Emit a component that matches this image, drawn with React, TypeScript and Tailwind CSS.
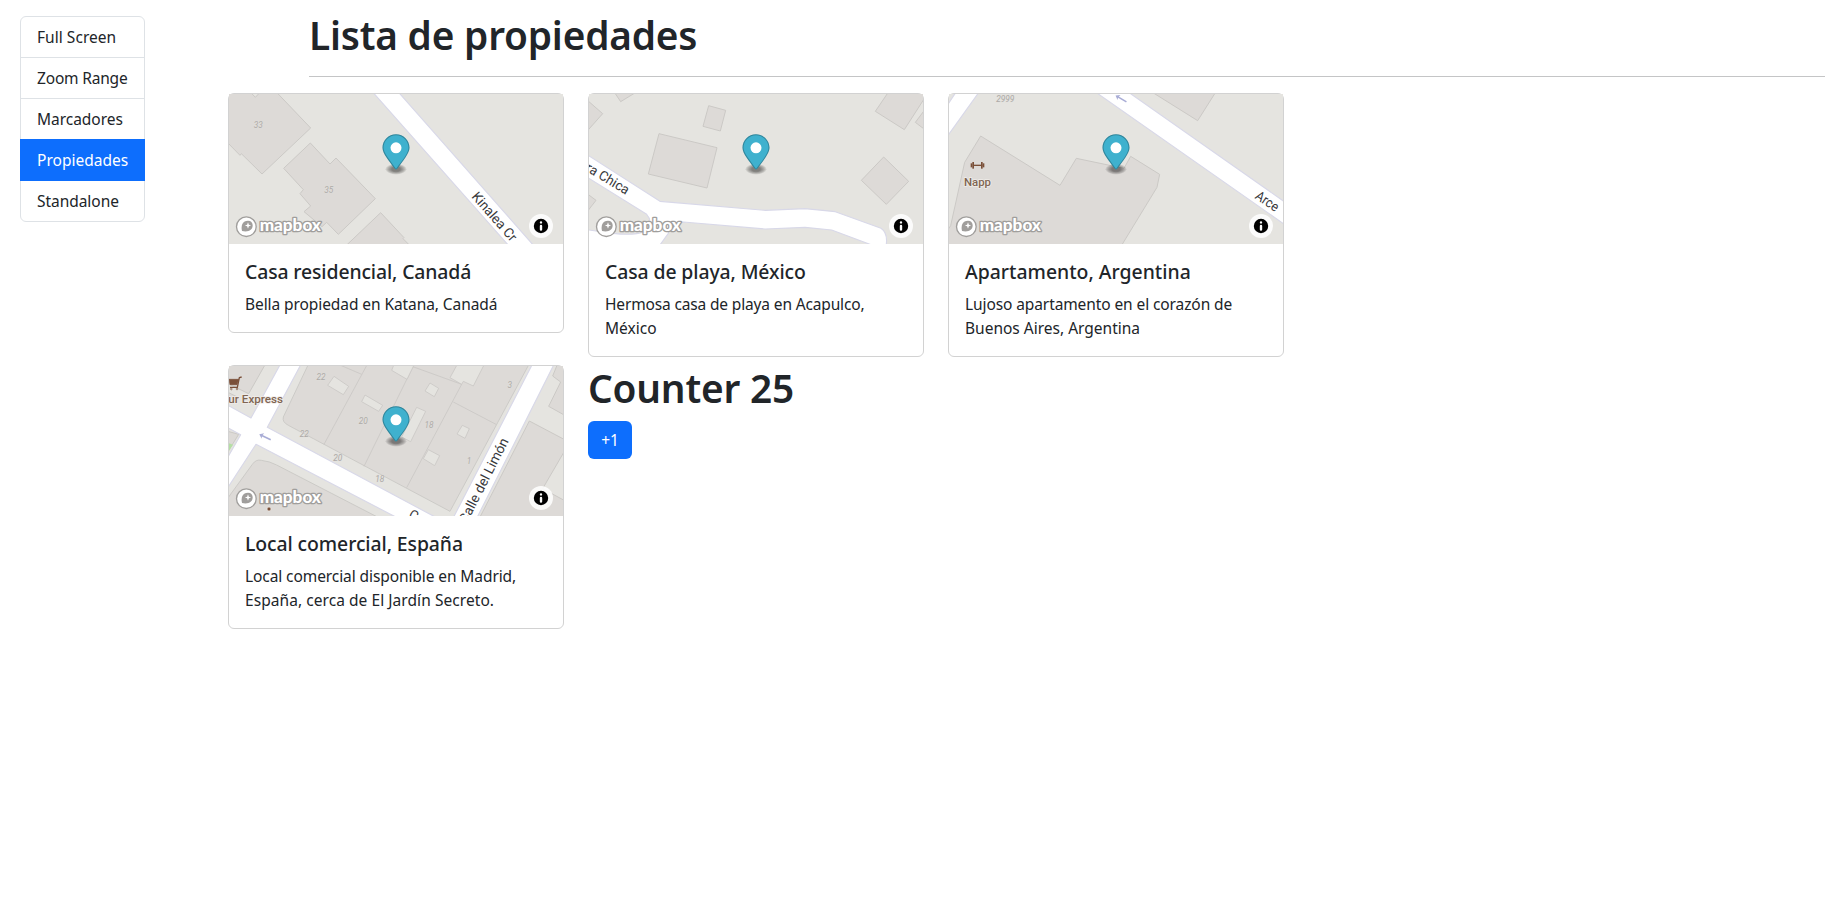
import React, { useState } from "react";

/* ---------- shared map drawing parts (3 drawing units per pixel) ---------- */

const LAND = "#e5e4e0";
const BUILDING = "#dddad7";
const EDGE = "#c9c7c4";
const ROAD_EDGE = "#d8d8e8";

function Building({ p }: { p: string }) {
  return <polygon points={p} fill={BUILDING} stroke={EDGE} strokeWidth={2.8} />;
}

function Yard({ p }: { p: string }) {
  return <polygon points={p} fill={LAND} stroke={EDGE} strokeWidth={2.4} />;
}

function Road({ d }: { d: string }) {
  return <path d={d} fill="#fff" stroke={ROAD_EDGE} strokeWidth={3.4} strokeLinejoin="round" />;
}

function HouseNo({ x, y, children }: { x: number; y: number; children: string }) {
  return (
    <text
      x={x}
      y={y + 9}
      textAnchor="middle"
      fontSize={28}
      fontStyle="italic"
      fill="#adaaa7"
      stroke="#e3e1de"
      strokeWidth={2}
      paintOrder="stroke"
      textLength={children.length * 13.6}
      lengthAdjust="spacingAndGlyphs"
    >
      {children}
    </text>
  );
}

function Street({ x, y, angle, length, anchor = "middle", children }: {
  x: number;
  y: number;
  angle: number;
  length: number;
  anchor?: "start" | "middle" | "end";
  children: string;
}) {
  return (
    <text
      transform={`translate(${x} ${y}) rotate(${angle})`}
      textAnchor={anchor}
      fontSize={41}
      fill="#37383b"
      stroke="#fff"
      strokeWidth={5}
      paintOrder="stroke"
      textLength={length}
      lengthAdjust="spacingAndGlyphs"
    >
      {children}
    </text>
  );
}

function Poi({ x, y, length, children }: { x: number; y: number; length: number; children: string }) {
  return (
    <text
      x={x}
      y={y}
      fontSize={35}
      fontWeight={500}
      fill="#7f6552"
      stroke="#efece9"
      strokeWidth={5}
      paintOrder="stroke"
      textLength={length}
      lengthAdjust="spacingAndGlyphs"
    >
      {children}
    </text>
  );
}

function OneWay({ x, y, angle }: { x: number; y: number; angle: number }) {
  return (
    <g transform={`translate(${x} ${y}) rotate(${angle})`} fill="#a9add6">
      <path d="M-19 0 L-7 -9 L-9 -2.4 L19 -2.4 L19 2.4 L-9 2.4 L-7 9 Z" />
    </g>
  );
}

function Pin() {
  return (
    <g transform="translate(487.5 148) scale(3)">
      <g fill="#000" fillOpacity={0.08}>
        <ellipse cx={13.5} cy={34.8} rx={10.5} ry={5.25} />
        <ellipse cx={13.5} cy={34.8} rx={9.5} ry={4.77} />
        <ellipse cx={13.5} cy={34.8} rx={8.5} ry={4.3} />
        <ellipse cx={13.5} cy={34.8} rx={7.5} ry={3.82} />
        <ellipse cx={13.5} cy={34.8} rx={6.5} ry={3.34} />
        <ellipse cx={13.5} cy={34.8} rx={5.5} ry={2.86} />
        <ellipse cx={13.5} cy={34.8} rx={4.5} ry={2.39} />
      </g>
      <path
        fill="#3FB1CE"
        d="M27 13.5C27 19.07 20.25 27 14.75 34.5C14.02 35.5 12.98 35.5 12.25 34.5C6.75 27 0 19.22 0 13.5C0 6.04 6.04 0 13.5 0C20.96 0 27 6.04 27 13.5Z"
      />
      <path
        opacity={0.25}
        d="M13.5 0C6.04 0 0 6.04 0 13.5C0 19.22 6.75 27 12.25 34.5C13 35.52 14.02 35.5 14.75 34.5C20.25 27 27 19.07 27 13.5C27 6.04 20.96 0 13.5 0ZM13.5 1C20.42 1 26 6.58 26 13.5C26 15.9 24.5 19.18 22.22 22.74C19.95 26.3 16.71 30.14 13.94 33.91C13.74 34.18 13.61 34.32 13.5 34.44C13.39 34.32 13.26 34.18 13.06 33.91C10.28 30.13 7.41 26.31 5.02 22.77C2.62 19.23 1 15.95 1 13.5C1 6.58 6.58 1 13.5 1Z"
      />
      <circle cx={13.5} cy={13.5} r={5.5} fill="#fff" />
    </g>
  );
}

function MapboxLogo() {
  return (
    <g>
      <circle cx={79} cy={425} r={29.5} fill="#fff" stroke="#a09e9c" strokeWidth={4} />
      <path d="M66 438 C62 420 68 407 84 407 A14.5 14.5 0 0 1 98 421 C98 436 84 442 66 438Z" fill="#a09e9c" />
      <path d="M84 412 L86.6 419 L93.5 421.5 L86.6 424 L84 431 L81.4 424 L74.5 421.5 L81.4 419Z" fill="#fff" />
      <text
        x={119}
        y={439}
        fontFamily="Lato, sans-serif"
        fontWeight={900}
        fontSize={50}
        fill="#fff"
        stroke="#a09e9c"
        strokeWidth={8}
        strokeLinejoin="round"
        paintOrder="stroke"
        textLength={184}
        lengthAdjust="spacingAndGlyphs"
      >
        mapbox
      </text>
    </g>
  );
}

function InfoButton() {
  return (
    <g>
      <circle cx={963} cy={423} r={36} fill="#fff" fillOpacity={0.85} />
      <path
        transform="translate(927 387) scale(3.6)"
        fillRule="evenodd"
        d="M4 10a6 6 0 1 0 12 0a6 6 0 1 0-12 0m5-3a1 1 0 1 0 2 0a1 1 0 1 0-2 0m0 3a1 1 0 1 1 2 0v3a1 1 0 1 1-2 0z"
      />
    </g>
  );
}

function MapView({ children }: { children: React.ReactNode }) {
  return (
    <svg viewBox="27 27 1002 450" className="block h-[150px] w-full font-['Roboto',sans-serif]">
      <rect x={27} y={27} width={1002} height={450} fill={LAND} />
      {children}
      <MapboxLogo />
      <InfoButton />
      <Pin />
    </svg>
  );
}

/* ---------- the four maps ---------- */

function CanadaMap() {
  return (
    <MapView>
      <Building p="20,20 90,20 106,37 122,20 168,20 272,129 126,267 64,206 60,211 20,170" />
      <Building p="271,174 330,237 348,219 466,341 355,448 320,412 306,425 252,380 272,363 240,326 250,314 191,250" />
      <Building p="376,484 482,383 552,458 549,461 572,484" />
      <Road d="M457 20 L534 20 L943 484 L868 484 Z" />
      <HouseNo x={115} y={119}>33</HouseNo>
      <HouseNo x={326} y={314}>35</HouseNo>
      <Street x={813} y={404} angle={48.5} length={182}>Kinalea Cr</Street>
    </MapView>
  );
}

function MexicoMap() {
  return (
    <MapView>
      <Building p="102,20 122,50 171,20" />
      <Building p="20,44 68,86 20,140" />
      <Building p="20,325 48,346 20,382" />
      <Building p="386,62 437,76 421,138 369,124" />
      <Building p="237,146 411,188 381,309 205,267" />
      <Building p="926,20 1036,20 1036,36 973,134 886,79" />
      <Building p="1036,72 1006,112 1036,135" />
      <Building p="911,216 986,289 919,358 844,286" />
      <Road d="M20 208 L240 349 L556 376 L675 371 L766 380 L903 430 Q925 445 918 484 L886 484 L755 435 L675 427 L556 432 L310 411 Q268 412 265 445 L237 484 L20 484 L20 434 L100 445 Q160 452 195 440 Q222 412 200 388 L20 276 Z" />
      <Street x={138} y={330} angle={31} length={144} anchor="end">ra Chica</Street>
    </MapView>
  );
}

function ArgentinaMap() {
  return (
    <MapView>
      <Building p="122,153 360,301 409,220 552,250 572,214 659,268 651,307 543,484 20,484 20,440 32,422 74,232" />
      <Building p="634,20 773,107 828,20" />
      <Road d="M49 20 L118 20 L20 157 L20 64 Z" />
      <Road d="M465 20 L563 20 L1036 352 L1036 420 Z" />
      <OneWay x={543} y={41} angle={31} />
      <HouseNo x={196} y={42}>2999</HouseNo>
      <Street x={974} y={360} angle={34} length={76}>Arce</Street>
      <g fill="#7a4f38">
        <rect x={99} y={239} width={28} height={4} />
        <rect x={97} y={231} width={5} height={20} />
        <rect x={92} y={235} width={5} height={12} />
        <rect x={123} y={231} width={5} height={20} />
        <rect x={128} y={235} width={5} height={12} />
      </g>
      <Poi x={72} y={303} length={81}>Napp</Poi>
    </MapView>
  );
}

function SpainMap() {
  return (
    <MapView>
      <Building p="20,20 137,20 86,110 20,78" />
      <Building p="20,104 52,120 40,140 20,130" />
      <Building p="20,222 56,232 20,290" />
      <polygon points="27,259 39,263 27,281" fill="#b4dfa4" />
      <path
        d="M266 20 L190 180 Q186 195 205 205 L690 463 L928 20 Z"
        fill={BUILDING}
        stroke={EDGE}
        strokeWidth={2.6}
      />
      <g stroke={EDGE} strokeWidth={2.4} fill="none">
        <path d="M443 20 L312 262" />
        <path d="M580 27 L432 328" />
        <path d="M725 82 L560 392" />
        <path d="M362 25 L425 52" />
        <path d="M573 27 L725 82" />
        <path d="M700 135 L828 202" />
      </g>
      <Yard p="342,58 386,88 370,113 323,85" />
      <Yard p="435,114 488,145 476,163 425,134" />
      <Yard p="523,20 515,40 561,67 584,20" />
      <Yard p="713,20 690,62 725,82 730,73 760,87 794,20" />
      <Yard p="630,78 656,94 643,119 615,102" />
      <Yard p="590,151 617,163 572,254 545,240" />
      <Yard p="727,205 748,215 735,244 711,231" />
      <Yard p="625,278 659,296 644,326 610,305" />
      <Building p="1013,20 998,57 1022,75 986,148 1036,176 1036,20" />
      <Building p="928,192 1036,249 1036,278 968,395 1036,432 1036,484 778,484" />
      <path
        d="M20 428 L97 322 Q108 306 124 310 Q150 313 170 324 L480 484 L20 484 Z"
        fill={BUILDING}
        stroke={EDGE}
        strokeWidth={2.6}
      />
      <Road d="M20 143 L93 183 L182 20 L244 20 L142 211 L653 484 L535 484 L108 262 L20 397 L20 307 L62 233 L20 210 Z" />
      <Road d="M938 20 L1003 20 L770 484 L699 484 Z" />
      <OneWay x={135} y={240} angle={26} />
      <HouseNo x={303} y={60}>22</HouseNo>
      <HouseNo x={430} y={192}>20</HouseNo>
      <HouseNo x={253} y={232}>22</HouseNo>
      <HouseNo x={353} y={302}>20</HouseNo>
      <HouseNo x={479} y={366}>18</HouseNo>
      <HouseNo x={627} y={204}>18</HouseNo>
      <HouseNo x={747} y={312}>1</HouseNo>
      <HouseNo x={869} y={84}>3</HouseNo>
      <Street x={867} y={252} angle={-63} length={280} anchor="end">Calle del Limón</Street>
      <Street x={563} y={481} angle={28} length={26} anchor="start">C</Street>
      <g fill="none" stroke="#7a4f38" strokeLinejoin="round">
        <path d="M27 67 L56 67 L51 83 L30 83 Z" fill="#7a4f38" strokeWidth={2} />
        <path d="M65 60 L58 62 L52 91 L30 91" strokeWidth={4} />
        <circle cx={34} cy={96} r={2.5} strokeWidth={2} />
        <circle cx={51} cy={96} r={2.5} strokeWidth={2} />
      </g>
      <Poi x={25} y={138} length={164}>ur Express</Poi>
      <circle cx={147} cy={456} r={6} fill="#7a4f38" stroke="#efece9" strokeWidth={2} />
    </MapView>
  );
}

/* ---------- page ---------- */

const menu = [
  { label: "Full Screen", tracking: "tracking-[0.04px]" },
  { label: "Zoom Range", tracking: "tracking-[-0.18px]" },
  { label: "Marcadores", tracking: "tracking-[-0.03px]" },
  { label: "Propiedades", tracking: "tracking-[0.02px]" },
  { label: "Standalone", tracking: "tracking-[-0.04px]" },
];

const properties = [
  {
    title: "Casa residencial, Canadá",
    titleTracking: "tracking-[-0.12px]",
    lines: [{ text: "Bella propiedad en Katana, Canadá", tracking: "tracking-[-0.08px]" }],
    Map: CanadaMap,
  },
  {
    title: "Casa de playa, México",
    titleTracking: "tracking-[-0.1px]",
    lines: [
      { text: "Hermosa casa de playa en Acapulco,", tracking: "tracking-[-0.15px]" },
      { text: "México", tracking: "" },
    ],
    Map: MexicoMap,
  },
  {
    title: "Apartamento, Argentina",
    titleTracking: "",
    lines: [
      { text: "Lujoso apartamento en el corazón de", tracking: "tracking-[-0.1px]" },
      { text: "Buenos Aires, Argentina", tracking: "" },
    ],
    Map: ArgentinaMap,
  },
  {
    title: "Local comercial, España",
    titleTracking: "tracking-[-0.08px]",
    lines: [
      { text: "Local comercial disponible en Madrid,", tracking: "tracking-[-0.09px]" },
      { text: "España, cerca de El Jardín Secreto.", tracking: "tracking-[0.06px]" },
    ],
    Map: SpainMap,
  },
];

function Sidebar() {
  return (
    <ul className="mt-4 ml-5 h-[206px] w-[125px] shrink-0 divide-y divide-[#dee2e6] rounded-md border border-[#dee2e6]">
      {menu.map(({ label, tracking }) => (
        <li
          key={label}
          className={
            label === "Propiedades"
              ? "-mx-px -mt-px h-[42px] border-y border-[#0d6efd] bg-[#0d6efd] px-[17px] py-2 text-white " + tracking
              : "px-4 py-2 " + tracking
          }
        >
          {label}
        </li>
      ))}
    </ul>
  );
}

export default function App() {
  const [counter, setCounter] = useState(25);
  return (
    <div className="flex min-h-screen overflow-hidden bg-white font-['Noto_Sans',sans-serif] text-[15.5px] leading-6 text-[#212529]">
      <Sidebar />
      <main className="ml-[83px] grow pt-3">
        <header className="ml-[81px]">
          <h1 className="h-12 text-[38.8px] leading-[46px] font-[580] tracking-[-0.2px]">Lista de propiedades</h1>
          <div role="separator" className="my-4 h-px bg-[#c4c5c6]" />
        </header>
        <section className="grid grid-cols-[repeat(3,336px)] items-start gap-x-6 gap-y-2">
          {properties.map(({ title, titleTracking, lines, Map }) => (
            <article key={title} className="rounded-md border border-[#d2d2d2] bg-white">
              <Map />
              <div className="p-4">
                <h5 className={"mb-2 text-[19.4px] leading-6 font-[550] " + titleTracking}>{title}</h5>
                <p>
                  {lines.map(({ text, tracking }) => (
                    <span key={text} className={"block whitespace-nowrap " + tracking}>{text}</span>
                  ))}
                </p>
              </div>
            </article>
          ))}
          <div>
            <h1 className="mb-2 h-12 text-[38.8px] leading-[46px] font-[580] tracking-[-0.2px]">Counter {counter}</h1>
            <button
              onClick={() => setCounter(counter + 1)}
              className="h-[38px] w-11 rounded-md bg-[#0d6efd] text-center text-white"
            >
              +1
            </button>
          </div>
        </section>
      </main>
    </div>
  );
}
